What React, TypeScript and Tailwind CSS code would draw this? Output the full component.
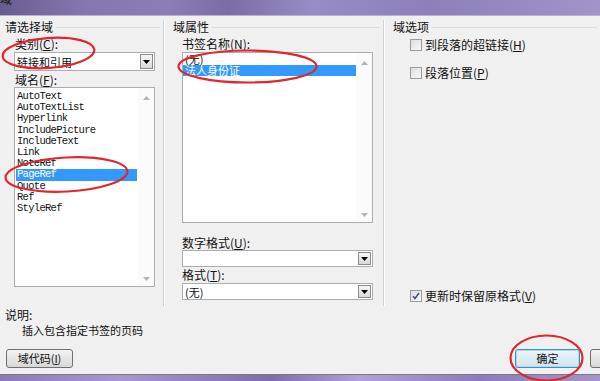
import React from "react";

const FIELD_NAMES = [
  "AutoText",
  "AutoTextList",
  "Hyperlink",
  "IncludePicture",
  "IncludeText",
  "Link",
  "NoteRef",
  "PageRef",
  "Quote",
  "Ref",
  "StyleRef",
];

function GroupHeader({ title }: { title: string }) {
  return (
    <div className="mt-[4px] flex h-[14px] items-center">
      <span className="text-[12px] leading-[14px]">{title}</span>
      <div className="mr-[3px] ml-[3px] h-px flex-1 bg-[#d5dfe5]" />
    </div>
  );
}

function Label({ text, k }: { text: string; k: string }) {
  return (
    <span className="text-[12px] leading-[14px]">
      {text}(<span className="underline">{k}</span>):
    </span>
  );
}

function DropButton({ h }: { h: string }) {
  return (
    <div
      className={`flex w-[13px] items-center justify-center border border-[#8c8c8c] bg-linear-to-b from-[#f6f6f6] to-[#dadada] ${h}`}
    >
      <svg width="7" height="4" viewBox="0 0 7 4">
        <path d="M0 0h7L3.5 4z" fill="#000" />
      </svg>
    </div>
  );
}

function ScrollArrows() {
  return (
    <div className="flex w-[16px] flex-col items-center justify-between bg-[#fbfbfb] pt-[8px] pb-[5px]">
      <svg width="7" height="4" viewBox="0 0 7 4">
        <path d="M0 4h7L3.5 0z" fill="#b4b4b4" />
      </svg>
      <svg width="7" height="4" viewBox="0 0 7 4">
        <path d="M0 0h7L3.5 4z" fill="#b4b4b4" />
      </svg>
    </div>
  );
}

function Check({ checked }: { checked?: boolean }) {
  return (
    <div className="flex h-[12px] w-[12px] items-center justify-center border border-[#9a9a9a] bg-linear-to-br from-[#dedede] to-[#f8f8f8]">
      {checked && (
        <svg width="8" height="8" viewBox="0 0 8 8">
          <path d="M1 4.2l2 2.3L7 1" fill="none" stroke="#3f5080" strokeWidth="1.6" />
        </svg>
      )}
    </div>
  );
}

function CheckRow({ text, k, checked, mt }: { text: string; k: string; checked?: boolean; mt: string }) {
  return (
    <div className={`flex h-[14px] items-center gap-[3px] pl-[17px] ${mt}`}>
      <Check checked={checked} />
      <span className="text-[12px] leading-[14px]">
        {text}(<span className="underline">{k}</span>)
      </span>
    </div>
  );
}

export default function App() {
  return (
    <div className="relative flex h-[381px] w-[600px] flex-col overflow-hidden bg-[#f0f0f0] font-['Noto_Sans_CJK_SC','Noto_Sans',sans-serif] text-[#111]">
      {/* title bar */}
      <div className="h-[16px] shrink-0 overflow-hidden border-b border-[#b9b0d2] bg-[linear-gradient(90deg,#6a5c90_0%,#8676ae_14%,#8c7db5_28%,#7c6ca5_38%,#998bc3_52%,#8e7fb8_72%,#a294c9_100%)]">
        <div className="-mt-[7px] text-[12px] leading-[12px] text-[#1a1a1a]">域</div>
      </div>

      {/* columns */}
      <div className="flex h-[291px] shrink-0">
        {/* left */}
        <div className="flex w-[163px] flex-col pl-[5px]">
          <GroupHeader title="请选择域" />
          <div className="mt-[3px] flex h-[14px] pl-[10px]">
            <Label text="类别" k="C" />
          </div>
          <div className="mt-[1px] ml-[9px] flex h-[19px] w-[141px] items-center border border-[#abadb3] bg-white pr-[1px] pl-[2px]">
            <span className="flex-1 text-[11px] leading-[14px]">链接和引用</span>
            <DropButton h="h-[15px]" />
          </div>
          <div className="mt-[2px] flex h-[14px] pl-[10px]">
            <Label text="域名" k="F" />
          </div>
          <div className="ml-[9px] flex h-[200px] w-[141px] border border-[#abadb3] bg-white">
            <div className="flex-1 px-[1px] pt-[3px]">
              {FIELD_NAMES.map((n) => (
                <div
                  key={n}
                  className={`h-[11.2px] pl-[1px] font-['Liberation_Mono',monospace] text-[10.5px] leading-[11.2px] tracking-[-0.7px] ${
                    n === "PageRef" ? "bg-[#3399ff] text-white" : ""
                  }`}
                >
                  {n}
                </div>
              ))}
            </div>
            <ScrollArrows />
          </div>
        </div>

        <div className="mt-[4px] mb-[1px] w-[2px] border-r border-l border-r-white border-l-[#d0d0d0]" />

        {/* middle */}
        <div className="flex w-[218px] flex-col pl-[8px]">
          <GroupHeader title="域属性" />
          <div className="mt-[3px] flex h-[14px] pl-[9px]">
            <Label text="书签名称" k="N" />
          </div>
          <div className="mt-[1px] ml-[9px] flex h-[171px] w-[191px] border border-[#abadb3] bg-white">
            <div className="flex-1 pt-[1px] text-[11px]">
              <div className="h-[11px] pl-[2px] leading-[11px]">(无)</div>
              <div className="h-[11px] bg-[#3399ff] pl-[2px] leading-[11px] text-white">法人身份证</div>
            </div>
            <ScrollArrows />
          </div>
          <div className="mt-[13px] flex h-[14px] pl-[9px]">
            <Label text="数字格式" k="U" />
          </div>
          <div className="ml-[9px] flex h-[17px] w-[191px] items-center justify-end border border-[#abadb3] bg-white pr-[1px]">
            <DropButton h="h-[13px]" />
          </div>
          <div className="mt-[1px] flex h-[14px] pl-[9px]">
            <Label text="格式" k="T" />
          </div>
          <div className="mt-[1px] ml-[9px] flex h-[17px] w-[191px] items-center border border-[#abadb3] bg-white pr-[1px] pl-[2px]">
            <span className="flex-1 text-[11px] leading-[14px]">(无)</span>
            <DropButton h="h-[13px]" />
          </div>
        </div>

        <div className="mt-[4px] mb-[1px] w-[2px] border-r border-l border-r-white border-l-[#d0d0d0]" />

        {/* right */}
        <div className="flex flex-1 flex-col pl-[8px]">
          <GroupHeader title="域选项" />
          <CheckRow text="到段落的超链接" k="H" mt="mt-[4px]" />
          <CheckRow text="段落位置" k="P" mt="mt-[14px]" />
          <CheckRow text="更新时保留原格式" k="V" checked mt="mt-[209px]" />
        </div>
      </div>

      {/* description */}
      <div className="mt-[1px] h-[14px] pl-[5px] text-[12px] leading-[14px]">说明:</div>
      <div className="mt-[1px] h-[14px] pl-[22px] text-[11px] leading-[14px]">插入包含指定书签的页码</div>

      {/* buttons */}
      <div className="mt-[12px] flex h-[19px] pl-[6px]">
        <div className="flex w-[67px] shrink-0 items-center justify-center rounded-[3px] border border-[#707070] bg-linear-to-b from-[#f3f3f3] to-[#d8d8d8] text-[11px]">
          域代码(<span className="underline">I</span>)
        </div>
        <div className="ml-auto flex w-[65px] shrink-0 items-center justify-center rounded-[3px] border border-[#3c8fc6] bg-linear-to-b from-[#eaf6fc] to-[#d2e4ee] text-[11px] shadow-[inset_0_0_0_1px_#a8dcf4]">
          确定
        </div>
        <div className="-mr-[55px] ml-[10px] w-[65px] shrink-0 rounded-[3px] border border-[#707070] bg-linear-to-b from-[#f3f3f3] to-[#d8d8d8]" />
      </div>

      <div className="flex-1" />
      {/* bottom window frame */}
      <div className="h-[7px] shrink-0 border-t border-[#7d7394] bg-[linear-gradient(90deg,#8b7bb1_0%,#a898cc_20%,#7e6ea5_45%,#b0a2d4_60%,#8c7cb5_80%,#a496c8_100%)]" />

      {/* red annotation marks */}
      <svg className="pointer-events-none absolute inset-0" width="600" height="381">
        <g fill="none" stroke="#e2262b" strokeWidth="2.2">
          <ellipse cx="48.5" cy="53" rx="46" ry="15" transform="rotate(-4 48.5 53)" />
          <ellipse cx="247.5" cy="66.5" rx="69" ry="16" />
          <ellipse cx="66.5" cy="174.5" rx="61" ry="17" transform="rotate(-3 66.5 174.5)" />
          <ellipse cx="546.5" cy="358" rx="36" ry="22.5" />
        </g>
      </svg>
    </div>
  );
}
